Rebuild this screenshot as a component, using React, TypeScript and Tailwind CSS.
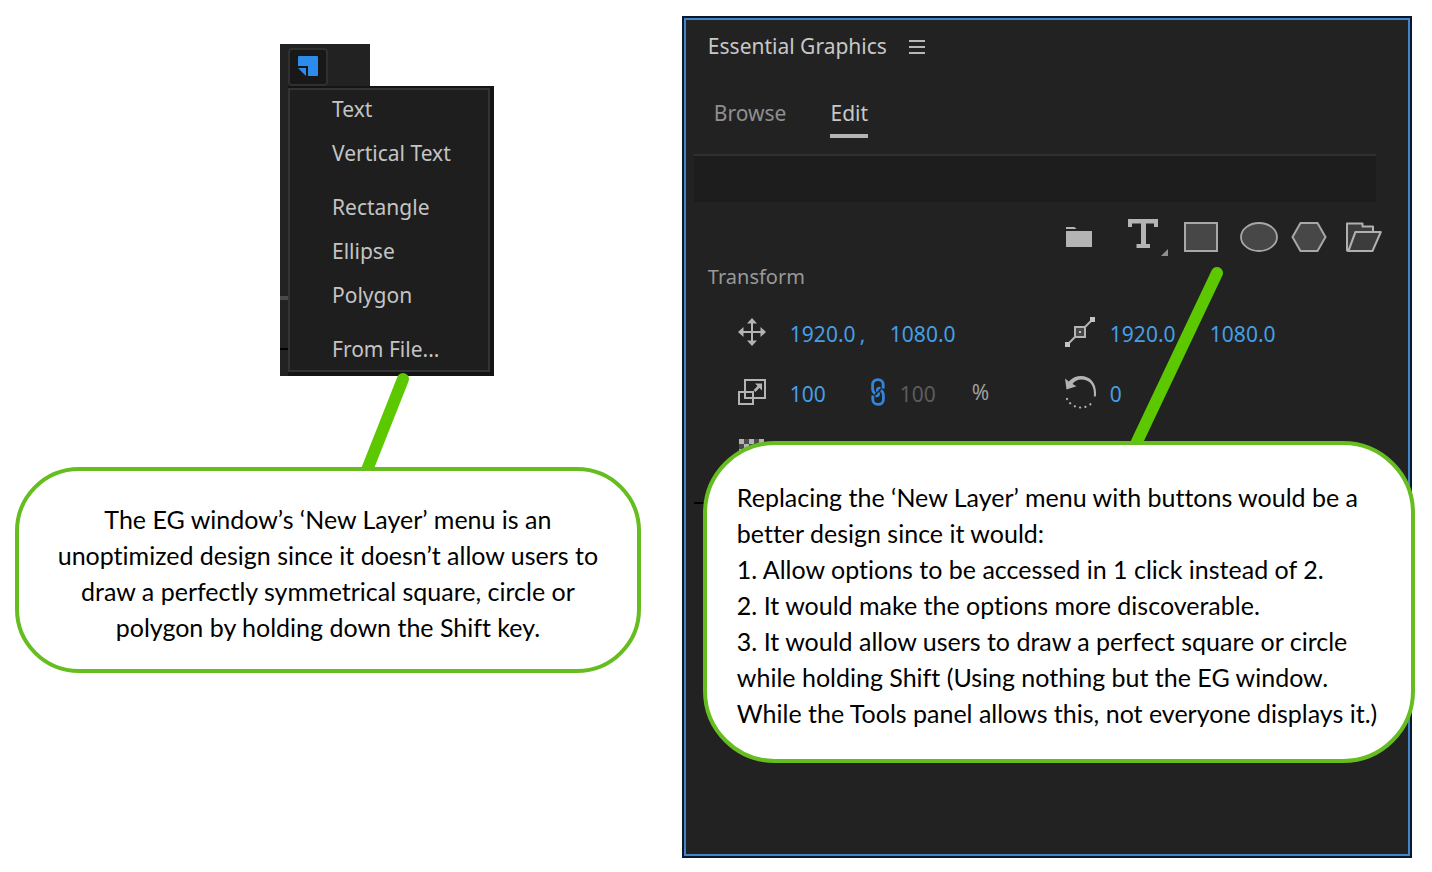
import type { ReactNode } from "react";

const UI_FONT = "font-['Noto_Sans',sans-serif]";

const menuGroups = [
  ["Text", "Vertical Text"],
  ["Rectangle", "Ellipse", "Polygon"],
  ["From File..."],
];

function NewLayerIcon() {
  return (
    <svg width="20" height="20" viewBox="0 0 20 20" fill="#2d8ceb" aria-hidden="true">
      <path d="M1 0h18a1 1 0 0 1 1 1v18a1 1 0 0 1-1 1h-9V10H0V1a1 1 0 0 1 1-1z" />
      <path d="M0 12h8v8z" />
    </svg>
  );
}

function NewLayerMenu() {
  return (
    <div className="w-[214px] text-[#c4c4c4]">
      <div className="h-[42px] w-[90px] bg-[#222222] pl-2 pt-1">
        <button
          aria-label="New Layer"
          className="flex h-[38px] w-10 items-center justify-center rounded border-2 border-[#303030] bg-[#181818] pb-0.5"
        >
          <NewLayerIcon />
        </button>
      </div>
      <div className="flex bg-[#141414]">
        <div className="flex w-2 flex-col bg-[#222222]">
          <div className="mt-[210px] h-1 bg-[#4a4a4a]" />
          <div className="mt-12 h-0.5 bg-black" />
        </div>
        <div role="menu" className="mb-1 mr-1 mt-0.5 flex flex-1 flex-col gap-3.5 border-2 border-[#333333] bg-[#1e1e1e]">
          {menuGroups.map((group) => (
            <div key={group[0]} className="flex flex-col gap-1">
              {group.map((item) => (
                <button key={item} role="menuitem" className="h-10 pl-[42px] text-left text-[21px] leading-[38px]">
                  <span className="block h-10">{item}</span>
                </button>
              ))}
            </div>
          ))}
        </div>
      </div>
    </div>
  );
}

function ToolButton({ label, children }: { label: string; children: ReactNode }) {
  return (
    <button aria-label={label} className="flex h-[34px] items-center">
      {children}
    </button>
  );
}

function Toolbar() {
  return (
    <div className="flex h-[52px] items-end justify-end pr-[26px]">
      <div className="mr-9">
        <ToolButton label="New group">
          <svg width="26" height="20" viewBox="0 0 26 20" fill="#b4b4b4">
            <path d="M0 0h8.500l2 2H0zM0 4h26v16H0z" />
          </svg>
        </ToolButton>
      </div>
      <div className="mr-4">
        <ToolButton label="Text tool">
          <svg width="40" height="38" viewBox="0 0 40 38" fill="#b4b4b4">
            <path d="M0 1h30v8h-4V5.500h-8V26h4v4H8.500v-4H13V5.500H4V9H0z" />
            <path d="M40 31v7h-7z" fill="#8f8f8f" />
          </svg>
        </ToolButton>
      </div>
      <div className="mr-[22px]">
        <ToolButton label="Rectangle tool">
          <svg width="34" height="30" viewBox="0 0 34 30" fill="#474747" stroke="#a8a8a8" strokeWidth="2">
            <path d="M1 1h32v28H1z" />
          </svg>
        </ToolButton>
      </div>
      <div className="mr-[13px]">
        <ToolButton label="Ellipse tool">
          <svg width="38" height="30" viewBox="0 0 38 30" fill="#474747" stroke="#a8a8a8" strokeWidth="1.800">
            <ellipse cx="19" cy="15" rx="18" ry="14" />
          </svg>
        </ToolButton>
      </div>
      <div className="mr-[19px]">
        <ToolButton label="Polygon tool">
          <svg width="36" height="30" viewBox="0 0 36 30" fill="#474747" stroke="#a8a8a8" strokeWidth="2">
            <path d="M9.500 1h17L34.500 15l-8 14h-17L1.500 15z" />
          </svg>
        </ToolButton>
      </div>
      <ToolButton label="From file">
        <svg width="36" height="30" viewBox="0 0 36 30" fill="#3c3c3c" stroke="#b0b0b0" strokeWidth="2" strokeLinejoin="round">
          <path d="M1 28.500V1.500h15.500v3H27V10H9.500L2.500 29z" />
          <path d="M9.500 10h25.300L26.500 29h-24z" />
        </svg>
      </ToolButton>
    </div>
  );
}

function PositionIcon() {
  return (
    <svg width="28" height="28" viewBox="0 0 28 28" fill="#b4b4b4" aria-hidden="true">
      <path d="M13 4h2v20h-2zM4 13h20v2H4z" />
      <path d="M14 0l5 5.500H9zM14 28l5-5.500H9zM0 14l5.500-5v10zM28 14l-5.500-5v10z" />
    </svg>
  );
}

function ScaleIcon() {
  return (
    <svg width="28" height="28" viewBox="0 0 28 28" fill="none" stroke="#b4b4b4" strokeWidth="2" aria-hidden="true">
      <path d="M7 2h20v18H7zM1 14h14v12H1z" />
      <path d="M16.500 13l5-5" strokeWidth="2.500" />
      <path d="M17 5.500h7v7z" fill="#b4b4b4" stroke="none" />
    </svg>
  );
}

function AnchorIcon() {
  return (
    <svg width="30" height="30" viewBox="0 0 30 30" fill="none" stroke="#b4b4b4" strokeWidth="2" aria-hidden="true">
      <path d="M2 28l8-8M20 10l8-8" />
      <path d="M10 10h10v10H10z" fill="#484848" />
      <path d="M0 25h5v5H0zM25 0h5v5h-5zM14 14h2v2h-2z" fill="#c4c4c4" stroke="none" />
    </svg>
  );
}

function RotationIcon() {
  return (
    <svg width="32" height="34" viewBox="0 0 32 34" fill="none" aria-hidden="true">
      <path
        d="M0 3.500l3.800 3C7.500 2.500 11.500 1 16 1c9.500 0 16.500 8 14.800 20.500h-2C30 10.500 24.500 4.500 16.500 4.500c-4 0-7 1.500-9 4.500l4 2.300L1.500 14.500z"
        fill="#b4b4b4"
      />
      <path d="M2 24a15.500 15.500 0 0 0 26.500 2" stroke="#b4b4b4" strokeWidth="2.200" strokeLinecap="round" strokeDasharray="0.100 5.300" />
    </svg>
  );
}

function LinkIcon() {
  return (
    <svg width="14" height="28" viewBox="0 0 14 28" fill="none" stroke="#2f86dc" strokeWidth="2.800" aria-hidden="true">
      <path d="M4.200 15.500C2.500 14.500 1.600 13 1.600 10.500V6.500C1.600 3.500 4 1.600 7 1.600s5.200 1.900 5.200 4.900V10.500" />
      <path d="M9.800 12.500c1.700 1 2.600 2.500 2.600 5v4c0 3-2.400 4.900-5.400 4.900s-5.200-1.900-5.200-4.900V17.500" />
      <path d="M8.500 8.500c-1.500 0-2 1-2 2.500v6c0 1.500-.5 2.500-2 2.500" strokeWidth="0" />
      <path d="M9.500 10H8.500C7 10 6.200 11 6.200 12.500V13.500M4.500 18H5.500c1.500 0 2.300-1 2.300-2.500V14.500" strokeWidth="2.400" />
    </svg>
  );
}

function OpacityIcon() {
  return (
    <svg width="26" height="26" viewBox="0 0 26 26" fill="#b4b4b4" aria-hidden="true">
      <rect x="1" width="25" height="25" fill="#4a4a4a" />
      <path d="M1 0h5v5H1zM11 0h5v5h-5zM21 0h5v5h-5zM6 5h5v5H6zM16 5h5v5h-5zM1 10h5v5H1zM11 10h5v5h-5zM21 10h5v5h-5zM6 15h5v5H6zM16 15h5v5h-5zM1 20h5v5H1zM11 20h5v5h-5zM21 20h5v5h-5z" />
    </svg>
  );
}

function ValueField({ label, value, muted }: { label: string; value: string; muted?: boolean }) {
  return (
    <input
      aria-label={label}
      defaultValue={value}
      disabled={muted}
      className={
        muted
          ? "w-[72px] bg-transparent text-[#5c5c5c] outline-none"
          : "w-[70px] bg-transparent text-[#459fe3] outline-none"
      }
    />
  );
}

function TransformControls() {
  return (
    <div className="grid grid-cols-[327px_1fr] pl-[52px] text-[21px] leading-[30px]">
      <div className="flex h-[60px] items-center">
        <div className="w-[52px] pb-1"><PositionIcon /></div>
        <ValueField label="Position X" value="1920.0" />
        <span className="w-[30px] text-[#459fe3]">,</span>
        <ValueField label="Position Y" value="1080.0" />
      </div>
      <div className="flex h-[60px] items-center">
        <div className="w-[45px] pb-1"><AnchorIcon /></div>
        <ValueField label="Anchor X" value="1920.0" />
        <span className="w-[30px] text-[#459fe3]">,</span>
        <ValueField label="Anchor Y" value="1080.0" />
      </div>
      <div className="flex h-[60px] items-center">
        <div className="w-[52px] pb-1"><ScaleIcon /></div>
        <ValueField label="Scale" value="100" />
        <button aria-label="Link scale" className="w-10 pb-1 pl-[11px]"><LinkIcon /></button>
        <ValueField label="Scale height" value="100" muted />
        <span className="pb-1 text-[#a0a0a0]">%</span>
      </div>
      <div className="flex h-[60px] items-center">
        <div className="w-[45px] pb-1"><RotationIcon /></div>
        <ValueField label="Rotation" value="0" />
      </div>
      <div className="flex h-[60px] items-center pb-1">
        <OpacityIcon />
      </div>
    </div>
  );
}

function GraphicsPanel() {
  return (
    <section className="h-full border-2 border-[#07182a] bg-[#222222]">
      <div className="h-full border-2 border-[#4384ca]">
        <header className="flex h-[54px] items-center gap-[22px] pl-[22px]">
          <h1 className="text-[21px] text-[#c8c8c8]">Essential Graphics</h1>
          <button aria-label="Panel menu" className="flex flex-col gap-1">
            <span className="h-0.5 w-4 bg-[#b8b8b8]" />
            <span className="h-0.5 w-4 bg-[#b8b8b8]" />
            <span className="h-0.5 w-4 bg-[#b8b8b8]" />
          </button>
        </header>
        <nav className="flex h-20 items-start gap-11 pl-7 pt-5 text-[21px] leading-[38px]">
          <button className="text-[#8f8f8f]">Browse</button>
          <button className="border-b-4 border-[#b4b4b4] text-[#c8c8c8]">
            <span className="block h-10">Edit</span>
          </button>
        </nav>
        <div className="ml-2 mr-8 h-12 border-t-2 border-[#303030] bg-[#1d1d1d]" />
        <Toolbar />
        <h2 className="flex h-[50px] items-center pb-1 pl-[22px] text-xl text-[#999999]">Transform</h2>
        <TransformControls />
        <div className="ml-2 mr-8 mt-[18px] h-0.5 bg-black" />
      </div>
    </section>
  );
}

const CALLOUT =
  "relative border-4 border-[#66bd1f] bg-white font-['Lato',sans-serif] text-[25px] leading-9 text-black whitespace-nowrap [font-variant-ligatures:none]";

export default function App() {
  return (
    <main className={`grid min-h-screen grid-cols-[6fr_7fr] gap-[41px] bg-white pb-3.5 pl-[15px] pr-5 pt-4 ${UI_FONT}`}>
      <div className="pt-7">
        <div className="pl-[265px]">
          <NewLayerMenu />
        </div>
        <div className="relative pt-[91px]">
          <svg className="absolute left-[340px] top-[-8px]" width="64" height="110" viewBox="0 0 64 110" aria-hidden="true">
            <path d="M48 11L12 102" stroke="#5cc800" strokeWidth="12" strokeLinecap="round" />
          </svg>
          <p className={`${CALLOUT} rounded-[64px] pb-6 pt-[30px] text-center`}>
            The EG window’s ‘New Layer’ menu is an
            <br />
            unoptimized design since it doesn’t allow users to
            <br />
            draw a perfectly symmetrical square, circle or
            <br />
            polygon by holding down the Shift key.
          </p>
        </div>
      </div>
      <div className="relative">
        <GraphicsPanel />
        <div className="absolute -right-[3px] left-[21px] top-[425px]">
          <svg className="absolute left-[420px] top-[-180px]" width="110" height="190" viewBox="0 0 110 190" aria-hidden="true">
            <path d="M94 12L11 187" stroke="#5cc800" strokeWidth="12" strokeLinecap="round" />
          </svg>
          <p className={`${CALLOUT} rounded-[72px] pb-7 pl-[30px] pt-[34px]`}>
            Replacing the ‘New Layer’ menu with buttons would be a
            <br />
            better design since it would:
            <br />
            1. Allow options to be accessed in 1 click instead of 2.
            <br />
            2. It would make the options more discoverable.
            <br />
            3. It would allow users to draw a perfect square or circle
            <br />
            while holding Shift (Using nothing but the EG window.
            <br />
            While the Tools panel allows this, not everyone displays it.)
          </p>
        </div>
      </div>
    </main>
  );
}
